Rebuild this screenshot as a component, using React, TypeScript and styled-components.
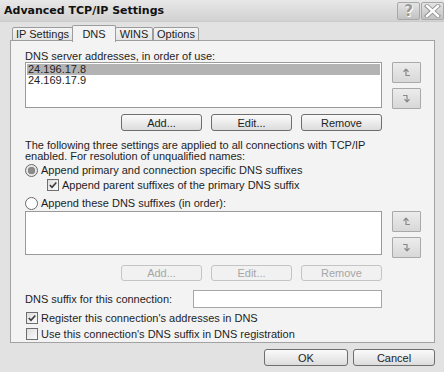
import React from "react";
import styled, { createGlobalStyle } from "styled-components";

const Global = createGlobalStyle`
  html, body { margin: 0; padding: 0; background: #e2e2e2; }
  * { box-sizing: border-box; }
`;

const Window = styled.div`
  width: 444px;
  height: 372px;
  background: #e2e2e2;
  font-family: "Liberation Sans", Arial, sans-serif;
  font-size: 11px;
  color: #1e1e1e;
  display: flex;
  flex-direction: column;
  overflow: hidden;
`;

const TitleBar = styled.div`
  height: 22px;
  display: flex;
  align-items: center;
  padding: 0 0 0 4px;
  background: linear-gradient(#e8e8e8, #dadada 60%, #d2d2d2);
  border-bottom: 1px solid #cacaca;
`;

const Title = styled.div`
  flex: 1;
  font-family: "DejaVu Sans", Verdana, sans-serif;
  font-weight: bold;
  font-size: 11px;
  color: #111;
`;

const CaptionButton = styled.div`
  width: 23px;
  height: 18px;
  margin-left: 1px;
  border: 1px solid #a8a8a8;
  border-radius: 2px;
  background: linear-gradient(#e4e4e4, #c2c2c2);
  display: flex;
  align-items: center;
  justify-content: center;
  font-family: "DejaVu Sans", sans-serif;
  font-weight: bold;
  font-size: 15px;
  color: #9a9a9a;
  text-shadow: 0 0 1px #fff, 1px 1px 0 #fff;
`;

const TabRow = styled.div`
  display: flex;
  align-items: flex-end;
  height: 16px;
  margin-top: 3px;
  padding-left: 12px;
  position: relative;
  z-index: 1;
`;

const Tab = styled.div<{ $active?: boolean; $w: number }>`
  width: ${(p) => p.$w}px;
  height: ${(p) => (p.$active ? 17 : 14)}px;
  margin: 0 ${(p) => (p.$active ? -1 : 0)}px ${(p) => (p.$active ? -1 : 0)}px;
  border: 1px solid #9c9c9c;
  border-bottom: ${(p) => (p.$active ? "none" : "1px solid #9c9c9c")};
  border-radius: 2px 2px 0 0;
  background: ${(p) => (p.$active ? "#f3f3f3" : "linear-gradient(#f4f4f4, #e4e4e4)")};
  display: flex;
  align-items: ${(p) => (p.$active ? "flex-start" : "center")};
  padding-top: ${(p) => (p.$active ? 2 : 0)}px;
  justify-content: center;
  font-size: 11px;
  position: relative;
  z-index: ${(p) => (p.$active ? 2 : 1)};
`;

const Panel = styled.div`
  margin: -1px 0 0 10px;
  width: 425px;
  height: 303px;
  background: #f3f3f3;
  border: 1px solid #a2a2a2;
  padding: 0 0 0 14px;
  display: flex;
  flex-direction: column;
`;

const Label = styled.div<{ $mt?: number }>`
  margin-top: ${(p) => p.$mt ?? 0}px;
  height: 12px;
  line-height: 12px;
  white-space: nowrap;
`;

const Paragraph = styled.div<{ $mt?: number }>`
  margin-top: ${(p) => p.$mt ?? 0}px;
  line-height: 10.5px;
  width: 380px;
`;

const ListSection = styled.div<{ $mt?: number }>`
  margin-top: ${(p) => p.$mt ?? 0}px;
  display: flex;
  gap: 10px;
`;

const ListBox = styled.div<{ $h: number }>`
  width: 357px;
  height: ${(p) => p.$h}px;
  background: #fff;
  border: 1px solid #9a9a9a;
  padding: 1px;
`;

const ListItem = styled.div<{ $selected?: boolean }>`
  height: 11px;
  line-height: 11px;
  padding-left: 1px;
  background: ${(p) => (p.$selected ? "#b3b3b3" : "transparent")};
`;

const ArrowCol = styled.div<{ $gap: number }>`
  display: flex;
  flex-direction: column;
  gap: ${(p) => p.$gap}px;
`;

const ArrowButton = styled.div`
  width: 29px;
  height: 21px;
  border: 1px solid #a9a9a9;
  border-radius: 1px;
  background: linear-gradient(#ececec, #d8d8d8);
  display: flex;
  align-items: center;
  justify-content: center;
`;

const ButtonRow = styled.div<{ $mt?: number }>`
  margin-top: ${(p) => p.$mt ?? 0}px;
  width: 357px;
  display: flex;
  justify-content: flex-end;
  gap: 9px;
`;

const PushButton = styled.div<{ $disabled?: boolean; $w?: number; $h?: number }>`
  width: ${(p) => p.$w ?? 81}px;
  height: ${(p) => p.$h ?? 17}px;
  border: 1px solid ${(p) => (p.$disabled ? "#c4c4c4" : "#6e6e6e")};
  border-radius: 3px;
  background: ${(p) =>
    p.$disabled ? "#f1f1f1" : "linear-gradient(#fafafa, #ececec 50%, #dcdcdc)"};
  color: ${(p) => (p.$disabled ? "#a6a6a6" : "#1e1e1e")};
  display: flex;
  align-items: center;
  justify-content: center;
  font-size: 11px;
`;

const OptionRow = styled.div<{ $mt?: number; $indent?: number }>`
  margin-top: ${(p) => p.$mt ?? 0}px;
  padding-left: ${(p) => p.$indent ?? 0}px;
  height: 14px;
  display: flex;
  align-items: center;
  gap: 3px;
  white-space: nowrap;
`;

const Radio = styled.div<{ $checked?: boolean }>`
  width: 13px;
  height: 13px;
  border-radius: 50%;
  border: 1px solid #6a6a6a;
  background: ${(p) => (p.$checked ? "#e6e6e6" : "#fff")};
  display: flex;
  align-items: center;
  justify-content: center;
  &::after {
    content: "";
    display: ${(p) => (p.$checked ? "block" : "none")};
    width: 7px;
    height: 7px;
    border-radius: 50%;
    background: #8c8c8c;
    box-shadow: inset 0 0 1px #555;
  }
`;

const Check = styled.div`
  width: 12px;
  height: 12px;
  border: 1px solid #6e6e6e;
  background: linear-gradient(135deg, #dedede, #fbfbfb);
  display: flex;
  align-items: center;
  justify-content: center;
`;

const SuffixRow = styled.div<{ $mt?: number }>`
  margin-top: ${(p) => p.$mt ?? 0}px;
  display: flex;
  align-items: center;
  height: 18px;
`;

const SuffixLabel = styled.div`
  width: 168px;
  white-space: nowrap;
`;

const TextField = styled.div`
  width: 189px;
  height: 18px;
  background: #fff;
  border: 1px solid #a6a6a6;
`;

const Footer = styled.div`
  margin-top: 6px;
  display: flex;
  justify-content: flex-end;
  gap: 5px;
  padding-right: 9px;
`;

const UpIcon = () => (
  <svg width="9" height="9" viewBox="0 0 9 9" fill="none" stroke="#8a8a8a" strokeWidth="1.2">
    <path d="M4 1 L1.5 3.8 M4 1 L6.5 3.8 M4 1 V7.5 H8" />
  </svg>
);

const DownIcon = () => (
  <svg width="9" height="9" viewBox="0 0 9 9" fill="none" stroke="#8a8a8a" strokeWidth="1.2">
    <path d="M1 1.5 H5 V8 M5 8 L2.5 5.2 M5 8 L7.5 5.2" />
  </svg>
);

const CheckMark = () => (
  <svg width="10" height="10" viewBox="0 0 10 10" fill="none" stroke="#3a3a3a" strokeWidth="1.6">
    <path d="M1.8 5 L4 7.3 L8.3 2.5" />
  </svg>
);

const CloseIcon = () => (
  <svg width="17" height="14" viewBox="0 0 17 14">
    <path d="M3 2 L14 12 M14 2 L3 12" stroke="#8f8f8f" strokeWidth="4.2" strokeLinecap="square" />
    <path d="M3 2 L14 12 M14 2 L3 12" stroke="#ffffff" strokeWidth="2.4" strokeLinecap="square" />
  </svg>
);

export default function App() {
  return (
    <>
      <Global />
      <Window>
        <TitleBar>
          <Title>Advanced TCP/IP Settings</Title>
          <CaptionButton>?</CaptionButton>
          <CaptionButton>
            <CloseIcon />
          </CaptionButton>
        </TitleBar>
        <TabRow>
          <Tab $w={61}>IP Settings</Tab>
          <Tab $w={44} $active>
            DNS
          </Tab>
          <Tab $w={38}>WINS</Tab>
          <Tab $w={46}>Options</Tab>
        </TabRow>
        <Panel>
          <Label $mt={9}>DNS server addresses, in order of use:</Label>
          <ListSection>
            <ListBox $h={46}>
              <ListItem $selected>24.196.17.8</ListItem>
              <ListItem>24.169.17.9</ListItem>
            </ListBox>
            <ArrowCol $gap={5}>
              <ArrowButton>
                <UpIcon />
              </ArrowButton>
              <ArrowButton>
                <DownIcon />
              </ArrowButton>
            </ArrowCol>
          </ListSection>
          <ButtonRow $mt={5}>
            <PushButton>Add...</PushButton>
            <PushButton>Edit...</PushButton>
            <PushButton>Remove</PushButton>
          </ButtonRow>
          <Paragraph $mt={9}>
            The following three settings are applied to all connections with TCP/IP enabled. For
            resolution of unqualified names:
          </Paragraph>
          <OptionRow $mt={2}>
            <Radio $checked />
            Append primary and connection specific DNS suffixes
          </OptionRow>
          <OptionRow $mt={1} $indent={22}>
            <Check>
              <CheckMark />
            </Check>
            Append parent suffixes of the primary DNS suffix
          </OptionRow>
          <OptionRow $mt={4}>
            <Radio />
            Append these DNS suffixes (in order):
          </OptionRow>
          <ListSection $mt={1}>
            <ListBox $h={44} />
            <ArrowCol $gap={5}>
              <ArrowButton>
                <UpIcon />
              </ArrowButton>
              <ArrowButton>
                <DownIcon />
              </ArrowButton>
            </ArrowCol>
          </ListSection>
          <ButtonRow $mt={7}>
            <PushButton $disabled $h={16}>Add...</PushButton>
            <PushButton $disabled $h={16}>Edit...</PushButton>
            <PushButton $disabled $h={16}>Remove</PushButton>
          </ButtonRow>
          <SuffixRow $mt={9}>
            <SuffixLabel>DNS suffix for this connection:</SuffixLabel>
            <TextField />
          </SuffixRow>
          <OptionRow $mt={3} $indent={1}>
            <Check>
              <CheckMark />
            </Check>
            Register this connection's addresses in DNS
          </OptionRow>
          <OptionRow $mt={2} $indent={1}>
            <Check />
            Use this connection's DNS suffix in DNS registration
          </OptionRow>
        </Panel>
        <Footer>
          <PushButton $w={84}>OK</PushButton>
          <PushButton $w={82}>Cancel</PushButton>
        </Footer>
      </Window>
    </>
  );
}
